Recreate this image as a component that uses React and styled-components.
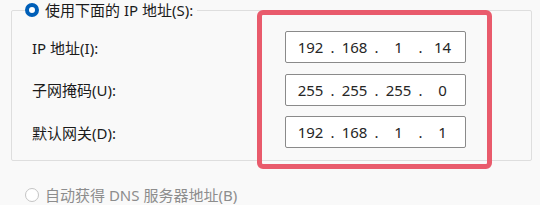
import React from 'react'
import styled, { createGlobalStyle } from 'styled-components'

const GlobalStyle = createGlobalStyle`
  html, body {
    margin: 0;
    padding: 0;
    background: #f9f9f9;
  }
  body {
    font-family: "Noto Sans", "Noto Sans CJK SC", sans-serif;
    color: #1b1b1b;
  }
`

const Page = styled.div`
  position: relative;
  width: 540px;
  height: 205px;
  overflow: hidden;
  background: #f9f9f9;
`

const GroupBox = styled.fieldset`
  box-sizing: border-box;
  width: 521px;
  margin: 0 0 0 11px;
  padding: 11px 0 12px 0;
  border: 1px solid #dedede;
  border-radius: 2px;
  display: flex;
  flex-direction: column;
  gap: 10.5px;
  min-width: 0;
`

const Legend = styled.legend`
  margin-left: 13px;
  padding: 0 4px 0 0;
  height: 20px;
  display: flex;
  align-items: center;
  gap: 6px;
  font-size: 15px;
  line-height: 20px;
  color: #1b1b1b;
`

const Radio = styled.span`
  box-sizing: border-box;
  width: 14px;
  height: 14px;
  border-radius: 50%;
  flex: none;
  background: #fff;
  border: ${p => (p.checked ? '4.5px solid #005fb8' : '1px solid #c4c4c4')};
`

const Row = styled.div`
  display: flex;
  align-items: center;
  height: 32px;
  padding-left: 20px;
`

const Label = styled.span`
  width: 253px;
  font-size: 15px;
  color: #1b1b1b;
`

const IpBox = styled.div`
  box-sizing: border-box;
  width: 181px;
  height: 32px;
  border: 1px solid #8a8a8a;
  border-radius: 2px;
  background: #fff;
  display: flex;
  align-items: center;
  padding-left: 8px;
  font-size: 15px;
  color: #262626;
`

const Octet = styled.span`
  width: 33px;
  text-align: center;
`

const Dot = styled.span`
  width: 11px;
  text-align: center;
`

const DnsRow = styled.div`
  display: flex;
  align-items: center;
  gap: 6px;
  margin: 24px 0 0 25px;
  font-size: 15px;
  line-height: 20px;
  color: #8d8d8d;
`

const Highlight = styled.div`
  position: absolute;
  left: 257px;
  top: 10px;
  width: 235px;
  height: 159px;
  box-sizing: border-box;
  border: 5px solid #e95b6c;
  border-radius: 6px;
  pointer-events: none;
`

const rows = [
  { label: 'IP 地址(I):', ip: ['192', '168', '1', '14'] },
  { label: '子网掩码(U):', ip: ['255', '255', '255', '0'] },
  { label: '默认网关(D):', ip: ['192', '168', '1', '1'] },
]

function IpField({ parts }) {
  return (
    <IpBox>
      {parts.map((p, i) => (
        <React.Fragment key={i}>
          {i > 0 && <Dot>.</Dot>}
          <Octet>{p}</Octet>
        </React.Fragment>
      ))}
    </IpBox>
  )
}

export default function App() {
  return (
    <Page>
      <GlobalStyle />
      <GroupBox>
        <Legend>
          <Radio checked />
          使用下面的 IP 地址(S):
        </Legend>
        {rows.map(r => (
          <Row key={r.label}>
            <Label>{r.label}</Label>
            <IpField parts={r.ip} />
          </Row>
        ))}
      </GroupBox>
      <DnsRow>
        <Radio />
        自动获得 DNS 服务器地址(B)
      </DnsRow>
      <Highlight />
    </Page>
  )
}
